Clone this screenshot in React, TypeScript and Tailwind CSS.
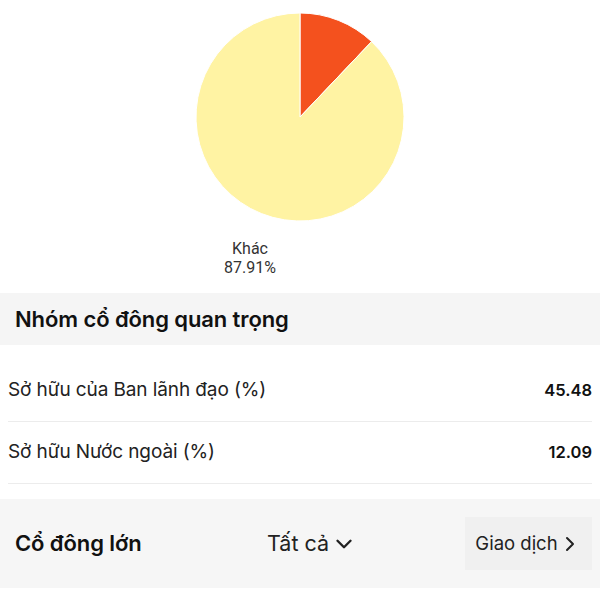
import { ChevronDown, ChevronRight } from "lucide-react";

const slices = [
  { label: "Nước ngoài", value: 12.09, color: "#F4511E" },
  { label: "Khác", value: 87.91, color: "#FFF3A3" },
];

function polar(cx: number, cy: number, r: number, deg: number) {
  const rad = ((deg - 90) * Math.PI) / 180;
  return [cx + r * Math.cos(rad), cy + r * Math.sin(rad)];
}

function PieChart() {
  const cx = 104;
  const cy = 104;
  const r = 104;
  let start = 0;
  return (
    <svg width="208" height="208" viewBox="0 0 208 208">
      {slices.map((slice) => {
        const sweep = (slice.value / 100) * 360;
        const [x1, y1] = polar(cx, cy, r, start);
        const [x2, y2] = polar(cx, cy, r, start + sweep);
        const large = sweep > 180 ? 1 : 0;
        const d = `M${cx},${cy} L${x1},${y1} A${r},${r} 0 ${large} 1 ${x2},${y2} Z`;
        start += sweep;
        return <path key={slice.label} d={d} fill={slice.color} stroke="#fff" strokeWidth="1" />;
      })}
    </svg>
  );
}

export default function App() {
  return (
    <div className="h-[600px] w-[600px] overflow-hidden bg-white font-['Roboto','Liberation_Sans',sans-serif] text-[#222]">
      <div className="flex justify-center pt-[13px]">
        <PieChart />
      </div>
      <div className="ml-[200px] mt-[18px] w-[100px] text-center text-[16px] leading-[19px] text-[#333]">
        <p>Khác</p>
        <p>87.91%</p>
      </div>

      <section className="mt-[16px] flex h-[52px] items-center bg-[#f5f5f5] px-[15px]">
        <h2 className="font-['Inter',sans-serif] text-[22px] font-semibold tracking-[-0.1px] text-[#111]">Nhóm cổ đông quan trọng</h2>
      </section>

      <div className="px-[8px] pt-[15px] font-['Inter',sans-serif]">
        <div className="flex h-[62px] items-center justify-between border-b border-[#ececec]">
          <span className="text-[19px] tracking-[-0.1px] text-[#222]">Sở hữu của Ban lãnh đạo (%)</span>
          <span className="text-[16.5px] font-semibold text-[#111]">45.48</span>
        </div>
        <div className="flex h-[62px] items-center justify-between border-b border-[#ececec]">
          <span className="text-[19px] tracking-[-0.1px] text-[#222]">Sở hữu Nước ngoài (%)</span>
          <span className="text-[16.5px] font-semibold text-[#111]">12.09</span>
        </div>
      </div>

      <section className="mt-[15px] flex h-[89px] items-center bg-[#f6f6f6] pl-[15px] pr-[8px] font-['Inter',sans-serif]">
        <h2 className="w-[252px] text-[22px] font-semibold tracking-[-0.1px] text-[#111]">Cổ đông lớn</h2>
        <button type="button" className="flex items-center gap-[2px] text-[21.5px] text-[#222]">
          Tất cả
          <ChevronDown size={26} strokeWidth={2.2} />
        </button>
        <button type="button" className="ml-auto flex h-[53px] w-[127px] items-center justify-center gap-0 bg-[#f0f0f0] text-[18.5px] text-[#222]">
          Giao dịch
          <ChevronRight size={24} strokeWidth={2} />
        </button>
      </section>
    </div>
  );
}
